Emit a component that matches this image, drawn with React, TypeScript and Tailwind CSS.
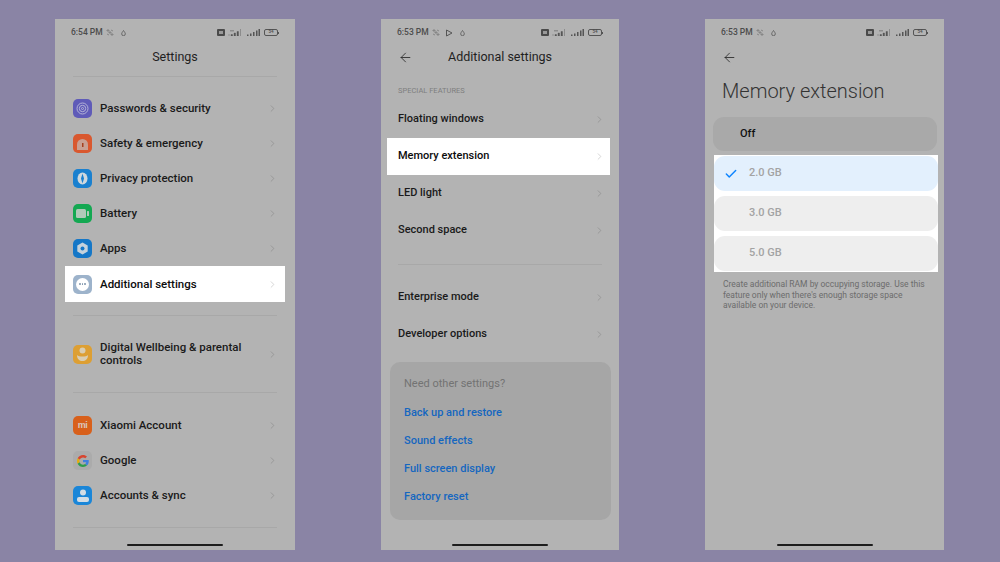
import React from "react";
import { ChevronRight, Check, ArrowLeft } from "lucide-react";

const StatusBar = ({ time, play }: { time: string; play?: boolean }) => (
    <div className="flex h-[26px] items-center justify-between pl-4 pr-4 pt-[1px] text-[8.5px] font-medium text-[#4c4c4c]">
        <div className="flex items-center gap-[3px]">
            <span>{time}</span>
            <svg width="8" height="7" viewBox="0 0 8 7" className="opacity-60">
                <path d="M1 1h2v1H1zM3 3h2v1H3zM5 5h2v1H5zM5 1l2 1M1 5l2 1" stroke="#555" strokeWidth="0.8" fill="none" />
            </svg>
            {play && (
                <svg width="8" height="8" viewBox="0 0 8 8" className="ml-[2px]">
                    <path d="M1.5 1 7 4 1.5 7z" stroke="#555" strokeWidth="1" fill="none" />
                </svg>
            )}
            <svg width="5" height="6" viewBox="0 0 5 6" className="ml-[4px]">
                <path d="M2.5.5C3.5 2 4.3 2.800 4.300 3.900a1.800 1.800 0 0 1-3.600 0C.7 2.800 1.500 2 2.500.5z" stroke="#555" strokeWidth="0.8" fill="none" />
            </svg>
        </div>
        <div className="flex items-center gap-[3px]">
            <div className="flex h-[7px] w-[8px] items-center justify-center rounded-[1px] bg-[#4a4a4a]">
                <div className="h-[3px] w-[4px] bg-[#999]"></div>
            </div>
            <svg width="15" height="7" viewBox="0 0 15 7">
                <path d="M0 6h2M3 5.500h1.500V7H3zM6 4h1.500v3H6zM9 2.500h1.500V7H9z" fill="#555" stroke="#555" strokeWidth="0.4" />
                <path d="M12 0h1v7h-1z" fill="#8c8c8c" />
                <path d="M2 1h4v1.500H2z" fill="#8c8c8c" />
            </svg>
            <svg width="13" height="7" viewBox="0 0 13 7" className="ml-[1px]">
                <path d="M0 5.500h1.500V7H0zM3 4.500h1.500V7H3zM6 3h1.500v4H6zM9 1.500h1.500V7H9zM11.500 0H13v7h-1.500z" fill="#555" />
            </svg>
            <div className="ml-[1px] flex items-center">
                <div className="flex h-[7px] w-[14px] items-center justify-center rounded-[2px] border border-[#555] text-[4.500px] leading-none">
                    54
                </div>
                <div className="h-[2px] w-[1px] bg-[#555]"></div>
            </div>
        </div>
    </div>
);

const HomeBar = () => (
    <div className="mt-auto mb-[4px] flex justify-center">
        <div className="h-[2px] w-[96px] rounded-full bg-[#1d1d1d]"></div>
    </div>
);

const Chevron = ({ light }: { light?: boolean }) => (
    <ChevronRight
        size={11}
        strokeWidth={1.500}
        className={light ? "shrink-0 text-[#c4c4c4]" : "shrink-0 text-[#8c8c8c]"}
    />
);

const Tile = ({ className, children }: { className: string; children: React.ReactNode }) => (
    <div className={`flex h-[19px] w-[19px] shrink-0 items-center justify-center rounded-[5px] ${className}`}>
        {children}
    </div>
);

const SettingsRow = ({
    icon,
    label,
    active,
    tall,
}: {
    icon: React.ReactNode;
    label: string;
    active?: boolean;
    tall?: boolean;
}) => (
    <div
        className={`mx-[10px] flex items-center gap-[8px] pl-[8px] pr-[7px] text-[11.500px] font-medium leading-[13px] ${
            tall ? "h-[40px]" : active ? "h-[36px] bg-white text-[#0c0c0c]" : "h-[35px]"
        } ${active ? "" : "text-[#1a1a1a]"}`}
    >
        {icon}
        <span className="flex-1">{label}</span>
        <Chevron light={active} />
    </div>
);

const PlainRow = ({ label, active }: { label: string; active?: boolean }) => (
    <div
        className={`ml-[6px] mr-[9px] flex h-[37px] items-center justify-between pl-[11px] pr-[5px] text-[11px] font-medium ${
            active ? "bg-white text-[#0c0c0c]" : "text-[#1a1a1a]"
        }`}
    >
        <span>{label}</span>
        <Chevron light={active} />
    </div>
);

const Divider = ({ className }: { className: string }) => <div className={`h-px bg-[#a8a8a8] ${className}`}></div>;

const icons = {
    password: (
        <Tile className="bg-[#5f5bb8]">
            <svg width="13" height="13" viewBox="0 0 13 13" fill="none" stroke="#b5b4d8" strokeWidth="1">
                <circle cx="6.500" cy="6.500" r="5.500" />
                <circle cx="6.500" cy="6.500" r="3.200" />
                <circle cx="6.500" cy="6.500" r="1" />
            </svg>
        </Tile>
    ),
    safety: (
        <Tile className="bg-[#d9582f]">
            <svg width="13" height="12" viewBox="0 0 13 12">
                <path d="M1 12V6.500a5.500 5.500 0 0 1 11 0V12z" fill="#c9a093" />
                <rect x="6" y="5" width="1.500" height="4" fill="#a5401f" />
            </svg>
        </Tile>
    ),
    privacy: (
        <Tile className="bg-[#1a80cf]">
            <svg width="11" height="13" viewBox="0 0 11 13">
                <ellipse cx="5.500" cy="6.500" rx="5" ry="6" fill="#cfd8de" />
                <path d="M5.500 1.500 7 6.500 5.500 11.500 4 6.500z" fill="#1a80cf" />
            </svg>
        </Tile>
    ),
    battery: (
        <Tile className="bg-[#14a852]">
            <svg width="13" height="9" viewBox="0 0 13 9">
                <rect width="10" height="9" rx="1.500" fill="#b0c9b9" />
                <rect x="11" y="2" width="2" height="5" rx="0.500" fill="#b0c9b9" />
            </svg>
        </Tile>
    ),
    apps: (
        <Tile className="bg-[#1577c7]">
            <svg width="13" height="13" viewBox="0 0 13 13">
                <path d="M6.500 .5 11.700 3.500V9.500L6.500 12.500 1.300 9.500V3.500z" fill="#c5d2dc" />
                <circle cx="6.500" cy="6.500" r="2" fill="#1577c7" />
            </svg>
        </Tile>
    ),
    additional: (
        <Tile className="bg-[#9db3cb]">
            <div className="flex h-[13px] w-[13px] items-center justify-center gap-[1px] rounded-full bg-white">
                <div className="h-[1.500px] w-[1.500px] rounded-full bg-[#7d93ab]"></div>
                <div className="h-[1.500px] w-[1.500px] rounded-full bg-[#7d93ab]"></div>
                <div className="h-[1.500px] w-[1.500px] rounded-full bg-[#7d93ab]"></div>
            </div>
        </Tile>
    ),
    wellbeing: (
        <Tile className="bg-[#dd9f33]">
            <svg width="13" height="14" viewBox="0 0 13 14" fill="#d9cdb3">
                <circle cx="6.500" cy="3.500" r="3" />
                <path d="M1 8c2 2 9 2 11 0 0 4-2.500 6-5.500 6S1 12 1 8z" />
            </svg>
        </Tile>
    ),
    xiaomi: (
        <Tile className="bg-[#d8601b]">
            <span className="font-['Liberation_Sans',sans-serif] text-[9px] font-bold leading-none tracking-[-0.5px] text-[#d9c9bd]">mi</span>
        </Tile>
    ),
    google: (
        <Tile className="bg-[#ababab]">
            <svg width="12" height="12" viewBox="0 0 48 48">
                <path fill="#d8452f" d="M24 9.500c3.500 0 6.700 1.300 9.200 3.400l6.800-6.800C35.900 2.400 30.300 0 24 0 14.600 0 6.500 5.400 2.600 13.200l7.900 6.100C12.400 13.500 17.700 9.500 24 9.500z" />
                <path fill="#3f7fe0" d="M47 24.500c0-1.600-.1-3.100-.4-4.500H24v9h13c-.6 3-2.300 5.500-4.800 7.200l7.700 6C44.300 38 47 31.800 47 24.500z" />
                <path fill="#e5ac0c" d="M10.500 28.700c-.5-1.400-.7-3-.7-4.700s.3-3.200.7-4.700l-7.900-6.100C1 16.500 0 20.100 0 24s1 7.500 2.600 10.800z" />
                <path fill="#2f9c4a" d="M24 48c6.500 0 11.900-2.100 15.900-5.800l-7.700-6c-2.200 1.500-4.900 2.300-8.200 2.300-6.300 0-11.600-4-13.500-9.800l-7.900 6.100C6.500 42.600 14.600 48 24 48z" />
            </svg>
        </Tile>
    ),
    accounts: (
        <Tile className="bg-[#1a86d8]">
            <svg width="12" height="13" viewBox="0 0 12 13" fill="#d3dde5">
                <circle cx="6" cy="3.500" r="3" />
                <rect y="8" width="12" height="5" rx="2" />
            </svg>
        </Tile>
    ),
};

const Phone = ({ className, children }: { className: string; children: React.ReactNode }) => (
    <div className={`flex h-[531px] flex-col bg-[#b3b3b3] ${className}`}>{children}</div>
);

const Option = ({ label, active }: { label: string; active?: boolean }) => (
    <div
        className={`flex h-[35px] items-center gap-[10px] rounded-[11px] pl-[10px] text-[11px] font-medium text-[#a3a3a3] ${
            active ? "bg-[#e3f0fd]" : "bg-[#eeeeee]"
        }`}
    >
        <div className="w-[15px] shrink-0">{active && <Check size={14} strokeWidth={2.500} className="text-[#0d84ff]" />}</div>
        <span>{label}</span>
    </div>
);

const App = () => {
    return (
        <div className="flex h-[562px] w-[1000px] overflow-hidden bg-[#8a84a5] pl-[55px] pt-[19px] font-['Roboto',sans-serif]">
            <Phone className="w-[240px]">
                <StatusBar time="6:54 PM" />
                <div className="flex h-[24px] items-center justify-center text-[12.500px] text-[#1f1f1f]">Settings</div>
                <Divider className="mx-[18px] mt-[7px]" />
                <div className="mt-[14px]">
                    <SettingsRow icon={icons.password} label="Passwords & security" />
                    <SettingsRow icon={icons.safety} label="Safety & emergency" />
                    <SettingsRow icon={icons.privacy} label="Privacy protection" />
                    <SettingsRow icon={icons.battery} label="Battery" />
                    <SettingsRow icon={icons.apps} label="Apps" />
                    <SettingsRow icon={icons.additional} label="Additional settings" active />
                </div>
                <Divider className="mx-[18px] mt-[13px]" />
                <div className="mt-[18px]">
                    <SettingsRow icon={icons.wellbeing} label="Digital Wellbeing & parental controls" tall />
                </div>
                <Divider className="mx-[18px] mt-[18px]" />
                <div className="mt-[15px]">
                    <SettingsRow icon={icons.xiaomi} label="Xiaomi Account" />
                    <SettingsRow icon={icons.google} label="Google" />
                    <SettingsRow icon={icons.accounts} label="Accounts & sync" />
                </div>
                <Divider className="mx-[18px] mt-[14px]" />
                <HomeBar />
            </Phone>

            <Phone className="ml-[86px] w-[238px]">
                <StatusBar time="6:53 PM" play />
                <div className="flex h-[24px] items-center pl-[17px] text-[12.500px] text-[#1f1f1f]">
                    <ArrowLeft size={15} strokeWidth={1.300} className="text-[#222]" />
                    <span className="ml-[35px]">Additional settings</span>
                </div>
                <div className="mt-[17px] pl-[17px] text-[7.500px] leading-[10px] text-[#7e7e7e]">SPECIAL FEATURES</div>
                <div className="mt-[5px]">
                    <PlainRow label="Floating windows" />
                    <PlainRow label="Memory extension" active />
                    <PlainRow label="LED light" />
                    <PlainRow label="Second space" />
                </div>
                <Divider className="ml-[17px] mr-[17px] mt-[15px]" />
                <div className="mt-[14px]">
                    <PlainRow label="Enterprise mode" />
                    <PlainRow label="Developer options" />
                </div>
                <div className="ml-[9px] mr-[8px] mt-[9px] flex h-[158px] flex-col rounded-[10px] bg-[#a6a6a6] pl-[14px] pt-[15px] text-[11px] leading-[14px]">
                    <div className="text-[#737373]">Need other settings?</div>
                    <div className="mt-[15px] flex flex-col gap-[14px] font-medium text-[#1566c0]">
                        <div>Back up and restore</div>
                        <div>Sound effects</div>
                        <div>Full screen display</div>
                        <div>Factory reset</div>
                    </div>
                </div>
                <HomeBar />
            </Phone>

            <Phone className="ml-[86px] w-[239px]">
                <StatusBar time="6:53 PM" />
                <div className="flex h-[24px] items-center pl-[17px]">
                    <ArrowLeft size={15} strokeWidth={1.300} className="text-[#222]" />
                </div>
                <div className="mt-[10px] pl-[17px] text-[20px] font-light leading-[24px] text-[#333]">Memory extension</div>
                <div className="ml-[8px] mr-[7px] mt-[14px] flex h-[34px] items-center rounded-[11px] bg-[#a9a9a9] pl-[27px] text-[11px] font-medium text-[#111]">
                    Off
                </div>
                <div className="ml-[9px] mr-[6px] mt-[4px] flex flex-col gap-[5px] bg-white py-[1px]">
                    <Option label="2.0 GB" active />
                    <Option label="3.0 GB" />
                    <Option label="5.0 GB" />
                </div>
                <div className="mt-[7px] pl-[18px] pr-[12px] text-[8.500px] leading-[10.500px] text-[#6c6c6c]">
                    Create additional RAM by occupying storage. Use this feature only when there's enough storage space available on your device.
                </div>
                <HomeBar />
            </Phone>
        </div>
    );
};

export default App;
